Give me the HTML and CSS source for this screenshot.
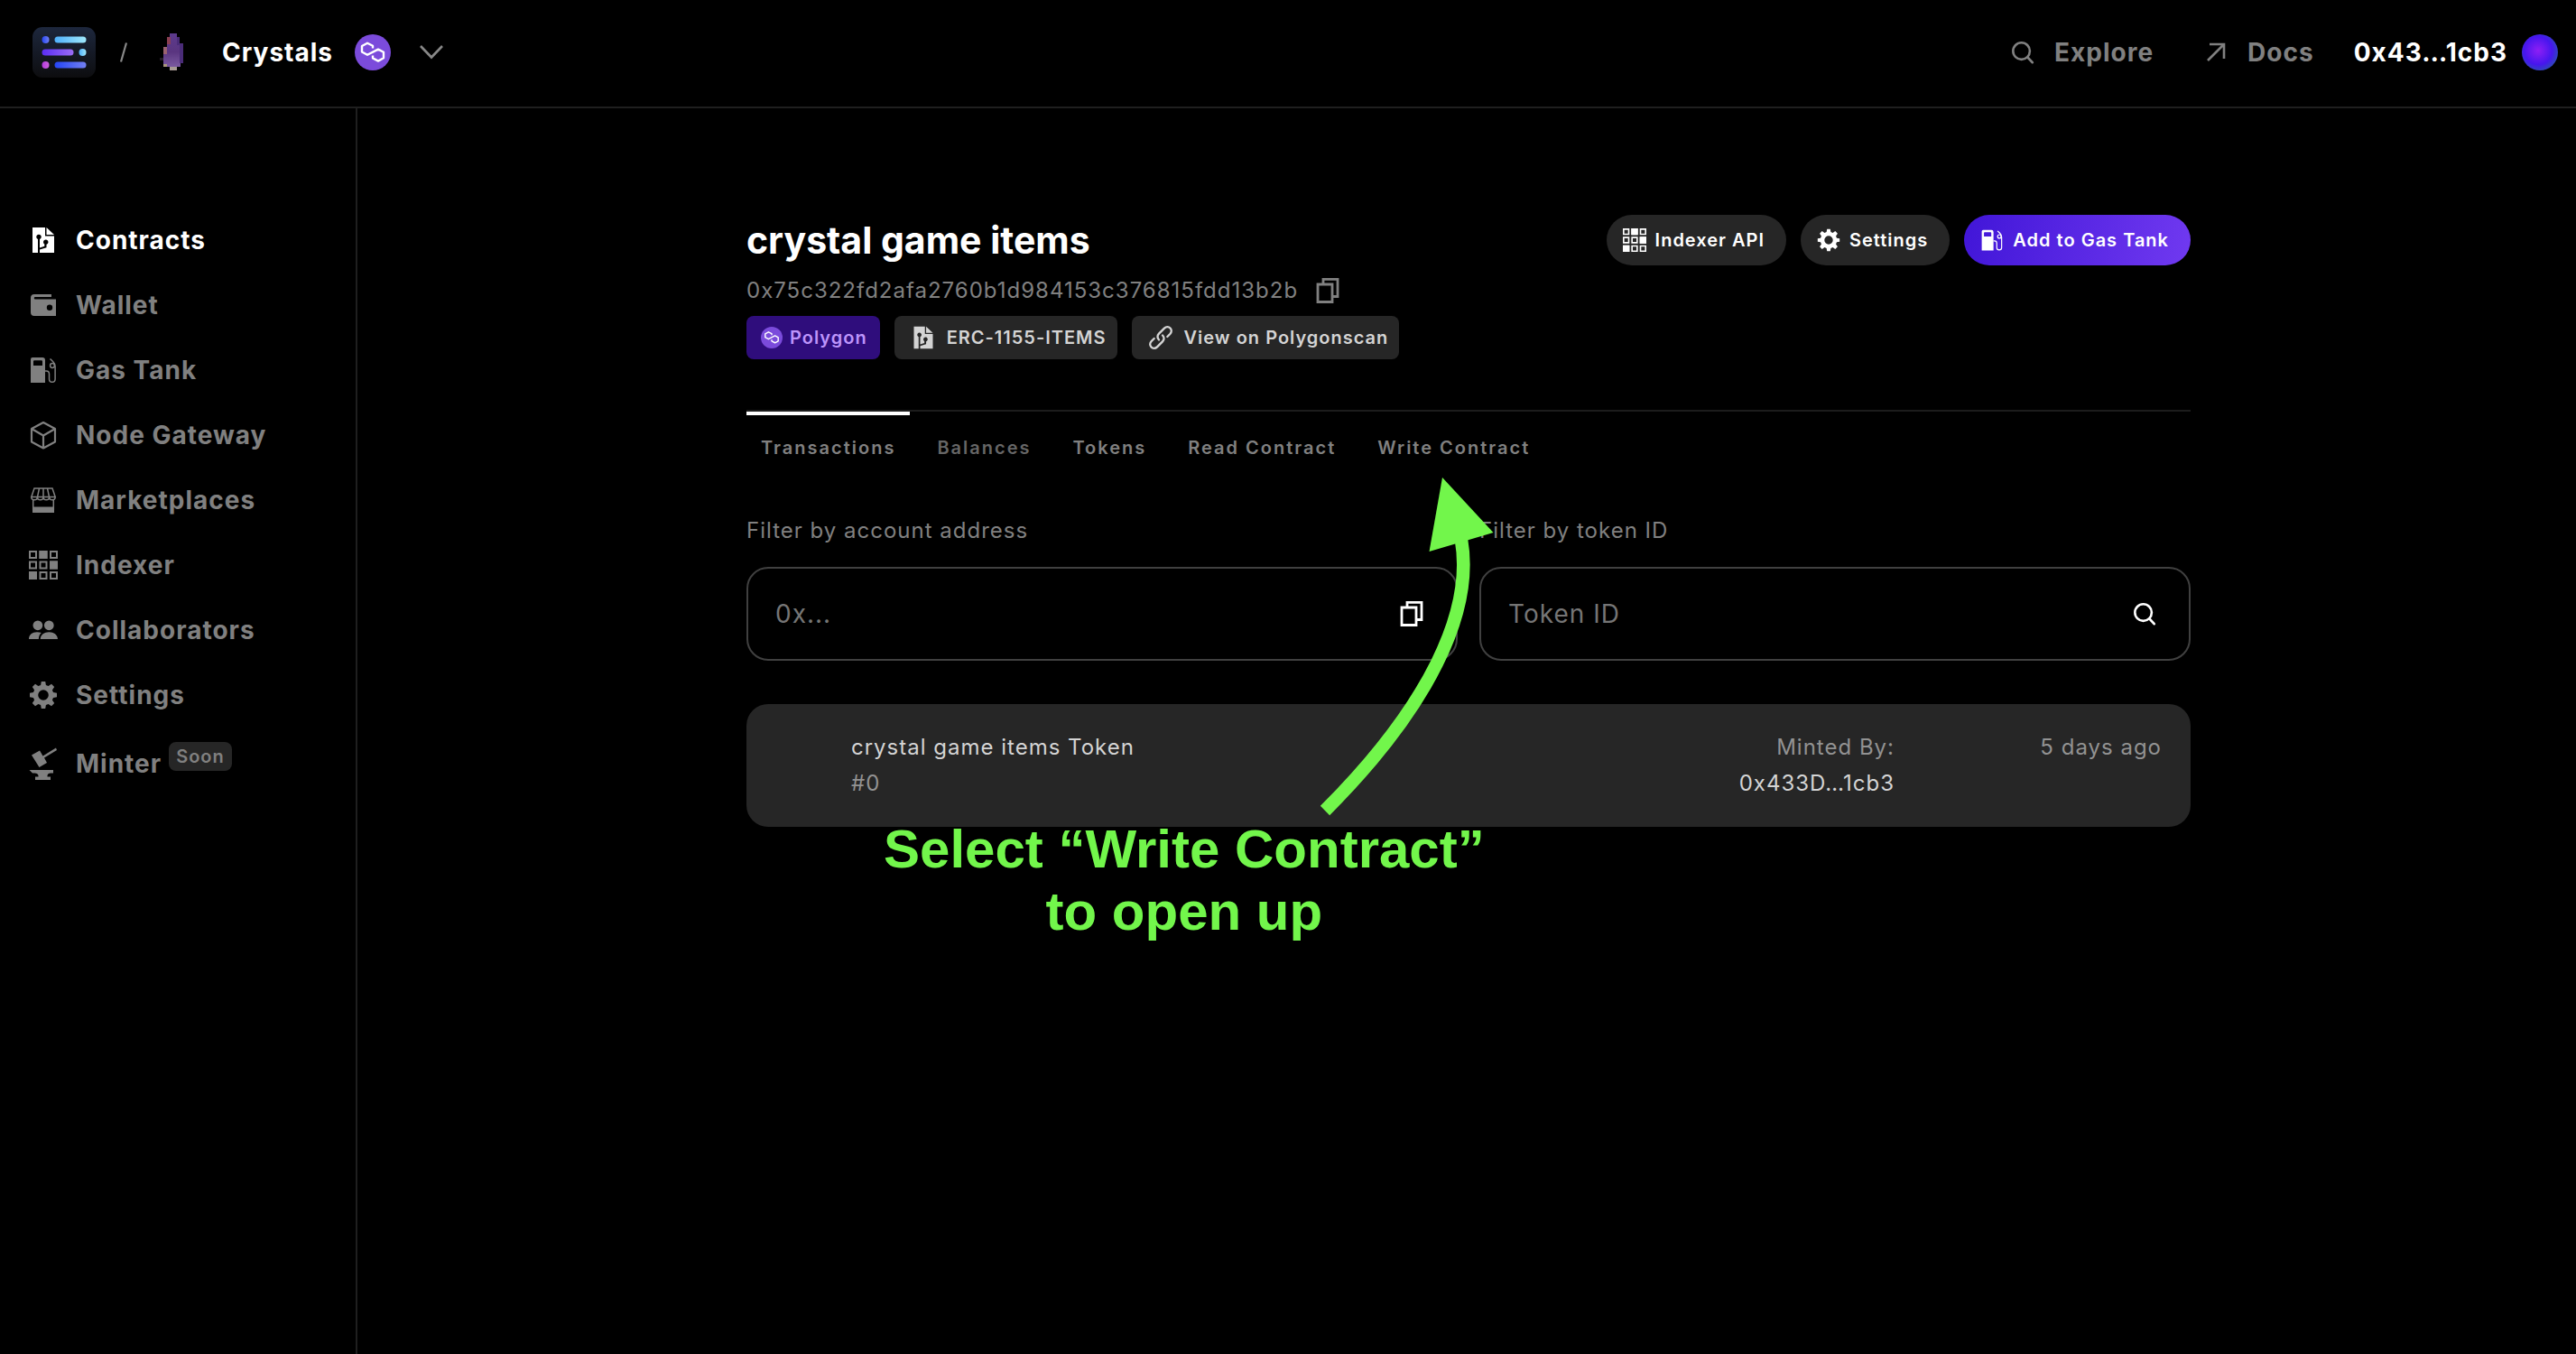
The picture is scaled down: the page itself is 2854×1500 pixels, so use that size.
FILE: index.html
```html
<!DOCTYPE html>
<html lang="en">
<head>
<meta charset="utf-8">
<meta name="viewport" content="width=device-width, initial-scale=1">
<title>crystal game items – Contracts</title>
<link rel="stylesheet" href="styles.css">
</head>
<body>
<svg class="sprite" aria-hidden="true">
  <defs>
    <linearGradient id="g-tile" x1="0" y1="0" x2="0" y2="1"><stop offset="0" stop-color="#1d273d"/><stop offset="1" stop-color="#0d0d0f"/></linearGradient>
    <linearGradient id="g-cyan"><stop offset="0" stop-color="#4fb0fb"/><stop offset="1" stop-color="#9fe8fb"/></linearGradient>
    <linearGradient id="g-violet"><stop offset="0" stop-color="#5a2df5"/><stop offset="1" stop-color="#9a6cf5"/></linearGradient>
    <linearGradient id="g-blue"><stop offset="0" stop-color="#2445f5"/><stop offset="1" stop-color="#7380f2"/></linearGradient>
    <linearGradient id="g-pink"><stop offset="0" stop-color="#b43ae0"/><stop offset="1" stop-color="#cc62dc"/></linearGradient>
    <linearGradient id="g-crystal" x1="0" y1="0" x2="0" y2="1"><stop offset="0" stop-color="#5c3a8c"/><stop offset=".5" stop-color="#5a3580"/><stop offset="1" stop-color="#8262a8"/></linearGradient>
  </defs>
  <symbol id="i-contract" viewBox="0 0 32 32">
    <path fill="currentColor" fill-rule="evenodd" d="M4 2h14v9.500h10V30H12v-3.500l7.500-2.200v-3.500a2.700 2.700 0 1 0-2.200-.3v2.300L12 24.500V15a2.700 2.700 0 1 0-2 0v15H4ZM19.500 2 28 10h-8.500Z"/>
  </symbol>
  <symbol id="i-wallet" viewBox="0 0 32 32">
    <path fill="currentColor" fill-rule="evenodd" d="M6 4h19v3H7a1 1 0 0 0 0 2.500h23V28H6a4 4 0 0 1-4-4V8a4 4 0 0 1 4-4Zm17 11.500a3.200 3.200 0 1 0 0 6.400 3.200 3.200 0 0 0 0-6.400Z"/>
  </symbol>
  <symbol id="i-gas" viewBox="0 0 32 32">
    <path fill="currentColor" fill-rule="evenodd" d="M4 2h11a3 3 0 0 1 3 3v25H2V4a2 2 0 0 1 2-2Zm2 3.200a1 1 0 0 0-1 1V11h10V6.200a1 1 0 0 0-1-1Z"/>
    <path fill="none" stroke="currentColor" stroke-width="1.500" d="M18 17h1.500c2 0 3 1.500 3 3.500v5.500a3.300 3.300 0 0 0 6.600 0V12c0-2-1-4-2.500-5.500L23.500 3.500"/>
    <circle cx="26" cy="11" r="2.400" fill="none" stroke="currentColor" stroke-width="1.500"/>
  </symbol>
  <symbol id="i-cube" viewBox="0 0 32 32">
    <path fill="none" stroke="currentColor" stroke-width="2.200" stroke-linejoin="round" d="M16 2 29 9v14.500L16 30.500 3 23.500V9Zm0 14.500v14M3 9l13 7.500L29 9"/>
  </symbol>
  <symbol id="i-market" viewBox="0 0 32 32">
    <path fill="none" stroke="currentColor" stroke-width="1.500" d="M6 3h20l3.200 9.500H2.800ZM11.500 3l-2 9.500M16 3v9.500M20.500 3l2 9.500M2.800 12.500a3.300 3.300 0 0 0 6.600 0 3.300 3.300 0 0 0 6.600 0 3.300 3.300 0 0 0 6.600 0 3.300 3.300 0 0 0 6.600 0M4.700 15v12M27.300 15v12"/>
    <path fill="currentColor" d="M4 23.500h24V30H4Z"/>
  </symbol>
  <symbol id="i-grid" viewBox="0 0 32 32">
    <path fill="none" stroke="currentColor" stroke-width="2" d="M1 1h7v7H1ZM12.500 1h7v7h-7ZM24 1h7v7h-7ZM1 12.500h7v7H1ZM12.500 12.500h7v7h-7ZM24 12.500h7v7h-7ZM1 24h7v7H1ZM12.500 24h7v7h-7ZM24 24h7v7h-7Z"/>
    <path fill="currentColor" d="M11.500 0h9v9h-9ZM23 11.500h9v9h-9ZM0 23h9v9H0Z"/>
  </symbol>
  <symbol id="i-people" viewBox="0 0 34 32">
    <circle cx="10.500" cy="10.500" r="5.700" fill="currentColor"/><circle cx="23.700" cy="10.500" r="5.700" fill="currentColor"/>
    <path fill="currentColor" d="M0 26.500C0 21.500 4 18.300 9.500 18.300c2 0 3.700.3 5.200 1-1.800 1.700-3 4-3.200 7.200ZM13.500 26.500c.3-5 4.500-8.200 10.200-8.200S33.700 21.500 34 26.500Z"/>
  </symbol>
  <symbol id="i-gear" viewBox="0 0 32 32">
    <path fill="currentColor" fill-rule="evenodd" d="M13.800 1h4.400l.7 4 2.700 1.100L25 3.800 28.200 7l-2.300 3.400 1.100 2.700 4 .7v4.400l-4 .7-1.100 2.700 2.300 3.400-3.200 3.200-3.400-2.300-2.700 1.100-.7 4h-4.400l-.7-4-2.700-1.100L7 28.200 3.800 25l2.300-3.400L5 18.900l-4-.7v-4.400l4-.7 1.100-2.700L3.800 7 7 3.800l3.400 2.300L13.100 5ZM16 10.200a5.800 5.800 0 1 0 0 11.600 5.800 5.800 0 0 0 0-11.600Z"/>
  </symbol>
  <symbol id="i-anvil" viewBox="0 0 32 36">
    <path fill="currentColor" d="M3 8.500 12 3.500l3.500 6L30 .5l1 2.500-14 8.500L20 17l-8.500 5ZM.5 25H27v3.500h-3c-2 0-3.500 1-3.500 3V32.500H24V36H7V32.500h3.500V31.500C10.500 29 8 28.500 4 28.500Z"/>
  </symbol>
  <symbol id="i-copy" viewBox="0 0 26 30">
    <path fill="none" stroke="currentColor" stroke-width="2.800" d="M2 8h16v19.500H2ZM8 8V2.400h16V21.500h-6"/>
  </symbol>
  <symbol id="i-search" viewBox="0 0 28 28">
    <circle cx="12.500" cy="12.500" r="10" fill="none" stroke="currentColor" stroke-width="2.800"/>
    <path stroke="currentColor" stroke-width="3" stroke-linecap="round" d="m20 20 5.500 6"/>
  </symbol>
  <symbol id="i-link" viewBox="0 0 28 28">
    <path fill="none" stroke="currentColor" stroke-width="2.400" stroke-linecap="round" d="M12 16.500c-2-2-2-4.800 0-6.800l6-6c2-2 4.800-2 6.500-.2s1.700 4.500-.2 6.500l-3 3M16 11.500c2 2 2 4.800 0 6.800l-6 6c-2 2-4.800 2-6.500.2s-1.700-4.500.2-6.500l3-3"/>
  </symbol>
  <symbol id="i-polygon" viewBox="0 0 40 40">
    <circle cx="20" cy="20" r="20" fill="#7b4bdb"/>
    <path fill="none" stroke="#fff" stroke-width="2.400" stroke-linejoin="round" d="M20 15.500v-2.700L14 9.700l-6 3.300v6.500l6 3.300 12-6.200 6 3.200v6.500l-6 3.300-6-3.200v-2.800"/>
  </symbol>
</svg>

<header class="topbar">
  <a class="logo" href="#" aria-label="Home">
    <svg viewBox="0 0 70 56"><rect width="70" height="56" rx="11" fill="url(#g-tile)"/>
      <circle cx="14.500" cy="14" r="4" fill="url(#g-blue)"/><rect x="24.500" y="10.500" width="35" height="7" rx="3.500" fill="url(#g-cyan)"/>
      <rect x="10.500" y="24.500" width="35" height="7" rx="3.500" fill="url(#g-violet)"/><circle cx="55.500" cy="28" r="4" fill="url(#g-cyan)"/>
      <circle cx="14.500" cy="42" r="4" fill="url(#g-pink)"/><rect x="24.500" y="38.500" width="35" height="7" rx="3.500" fill="url(#g-blue)"/></svg>
  </a>
  <svg class="slash" viewBox="0 0 10 24"><path stroke="#888" stroke-width="2.200" d="M2 22.500 8 1.500"/></svg>
  <button class="project" type="button">
    <svg class="crystal" viewBox="0 0 28 44" shape-rendering="crispEdges">
      <path fill="url(#g-crystal)" d="M12 1h8v4h3v7h4v22h-3v4h-4v4h-8v-4H5V16h4V5h3Z"/>
      <path fill="#8a3f52" d="M9 5h4v8H9Z"/><path fill="#9a6270" d="M5 16h4v8H5Z"/><path fill="#a8977c" d="M5 35h4v3H5Z"/><path fill="#a79a94" d="M12 38h8v4h-8Z"/><path fill="#241c26" d="M1 28h4v3H1Z"/>
      <path fill="#4a2c78" d="M20 5h3v9h-3ZM23 12h4v22h-4Z"/>
    </svg>
    <span>Crystals</span>
    <svg class="network" viewBox="0 0 40 40"><use href="#i-polygon"/></svg>
    <svg class="chevron" viewBox="0 0 28 18"><path fill="none" stroke="#888" stroke-width="2.600" d="m2 2 12 12.500L26 2"/></svg>
  </button>
  <nav class="toplinks" aria-label="Account">
    <a href="#"><svg class="s26"><use href="#i-search"/></svg>Explore</a>
    <a href="#"><svg class="s26" viewBox="0 0 26 26"><path fill="none" stroke="currentColor" stroke-width="2.600" d="M4 22 22 4M6 4h16v16"/></svg>Docs</a>
    <button class="account" type="button">0x43…1cb3<span class="avatar"></span></button>
  </nav>
</header>

<div class="layout">
  <nav class="sidebar" aria-label="Project">
    <a class="active" href="#" aria-current="page"><svg class="icon"><use href="#i-contract"/></svg>Contracts</a>
    <a href="#"><svg class="icon"><use href="#i-wallet"/></svg>Wallet</a>
    <a href="#"><svg class="icon"><use href="#i-gas"/></svg>Gas Tank</a>
    <a href="#"><svg class="icon"><use href="#i-cube"/></svg>Node Gateway</a>
    <a href="#"><svg class="icon"><use href="#i-market"/></svg>Marketplaces</a>
    <a href="#"><svg class="icon"><use href="#i-grid"/></svg>Indexer</a>
    <a href="#"><svg class="icon"><use href="#i-people"/></svg>Collaborators</a>
    <a href="#"><svg class="icon"><use href="#i-gear"/></svg>Settings</a>
    <a class="minter" href="#"><svg class="icon"><use href="#i-anvil"/></svg>Minter<span class="soon">Soon</span></a>
  </nav>

  <main>
    <div class="content">
      <div class="heading">
        <div class="summary">
          <h1>crystal game items</h1>
          <p class="address">0x75c322fd2afa2760b1d984153c376815fdd13b2b
            <button class="copy" type="button" aria-label="Copy address"><svg><use href="#i-copy"/></svg></button></p>
          <div class="chips">
            <span class="chip polygon"><svg><use href="#i-polygon"/></svg>Polygon</span>
            <span class="chip"><svg><use href="#i-contract"/></svg>ERC-1155-ITEMS</span>
            <a class="chip" href="#"><svg><use href="#i-link"/></svg>View on Polygonscan</a>
          </div>
        </div>
        <div class="actions">
          <button type="button"><svg><use href="#i-grid"/></svg>Indexer API</button>
          <button type="button"><svg><use href="#i-gear"/></svg>Settings</button>
          <button class="primary" type="button"><svg><use href="#i-gas"/></svg>Add to Gas Tank</button>
        </div>
      </div>

      <nav class="tabs" aria-label="Contract">
        <a class="current" href="#">Transactions</a>
        <a class="muted" href="#">Balances</a>
        <a href="#">Tokens</a>
        <a href="#">Read Contract</a>
        <a href="#">Write Contract</a>
      </nav>

      <form class="filters">
        <div class="filter">
          <label for="account">Filter by account address</label>
          <div class="field"><input id="account" type="text" placeholder="0x..."><button type="button" aria-label="Paste address"><svg><use href="#i-copy"/></svg></button></div>
        </div>
        <div class="filter">
          <label for="token">Filter by token ID</label>
          <div class="field"><input id="token" type="text" placeholder="Token ID"><button type="button" aria-label="Search"><svg><use href="#i-search"/></svg></button></div>
        </div>
      </form>

      <article class="transaction">
        <div class="token"><span class="strong">crystal game items Token</span><span>#0</span></div>
        <div class="minted"><span>Minted By:</span><span class="strong">0x433D…1cb3</span></div>
        <time>5 days ago</time>
      </article>

      <svg class="arrow" viewBox="0 0 200 380" aria-hidden="true">
        <path fill="none" stroke="#72f64b" stroke-width="14.600" d="M164 70C178 150 128 255 13 370"/>
        <path fill="#72f64b" d="M143 1 199.500 62 128.500 83Z"/>
      </svg>
      <p class="callout">Select “Write Contract”<br>to open up</p>
    </div>
  </main>
</div>
</body>
</html>
```
FILE: styles.css
```css
* { box-sizing: border-box; }

body {
  display: flex;
  flex-direction: column;
  min-height: 100vh;
  margin: 0;
  background: #000;
  color: #fff;
  font: 400 24px/40px Inter, "Liberation Sans", sans-serif;
  letter-spacing: 1px;
}

a { color: inherit; text-decoration: none; }
h1, p { margin: 0; }
svg { display: block; flex: none; }
.sprite { position: absolute; width: 0; height: 0; }

button {
  display: flex;
  align-items: center;
  padding: 0;
  border: 0;
  background: none;
  color: inherit;
  font: inherit;
  letter-spacing: inherit;
  cursor: pointer;
}

/* Top bar */
.topbar {
  display: flex;
  align-items: center;
  min-height: 120px;
  padding: 0 20px 2px 36px;
  border-bottom: 2px solid #1f1f1f;
  font-size: 28px;
  font-weight: 700;
}
.logo svg { width: 70px; height: 56px; }
.slash { width: 10px; height: 24px; margin: 0 34px 0 26px; }
.crystal { width: 28px; height: 44px; }
.project span { margin: 0 24px 0 42px; }
.network { width: 40px; height: 40px; }
.chevron { width: 28px; height: 18px; margin-left: 31px; }
.toplinks {
  display: flex;
  align-items: center;
  margin-left: auto;
}
.toplinks a {
  display: flex;
  align-items: center;
  gap: 22px;
  margin-right: 56px;
  color: #808080;
}
.toplinks a + a { margin-right: 44px; }
.s26 { width: 26px; height: 26px; }
.account { gap: 16px; }
.avatar {
  width: 40px;
  height: 40px;
  border-radius: 50%;
  background: radial-gradient(circle at 45% 45%, #8e1ff5 0, #4616ee 50%, #2f49b8 75%);
}

/* Side navigation */
.layout { display: flex; flex: 1; gap: 4px; }
.sidebar {
  display: flex;
  flex: none;
  flex-direction: column;
  gap: 32px;
  width: 396px;
  padding: 126px 16px 32px 32px;
  border-right: 2px solid #1f1f1f;
  color: #808080;
  font-size: 28px;
  font-weight: 700;
}
.sidebar a { display: flex; align-items: center; gap: 20px; }
.sidebar .active { color: #fff; }
.icon { width: 32px; height: 32px; }
.minter { margin-top: 4px; }
.minter .icon { height: 36px; }
.soon {
  align-self: flex-start;
  margin: -4px 0 0 -12px;
  padding: 0 8px;
  border-radius: 8px;
  background: #262626;
  font-size: 20px;
  font-weight: 600;
  line-height: 32px;
}

/* Contract page */
main { flex: 1; min-width: 0; padding: 118px 32px 64px; }
.content { position: relative; max-width: 1600px; margin: 0 auto; }
.heading { display: flex; justify-content: space-between; align-items: flex-start; }
h1 { font-size: 41px; font-weight: 700; line-height: 56px; letter-spacing: 0; }
.address {
  display: flex;
  align-items: center;
  gap: 20px;
  margin-top: 8px;
  color: #808080;
  line-height: 40px;
}
.copy svg { width: 26px; height: 30px; }
.chips { display: flex; gap: 16px; margin-top: 8px; }
.chip {
  display: flex;
  align-items: center;
  gap: 12px;
  padding: 0 12px 0 18px;
  border-radius: 8px;
  background: #262626;
  color: #d4d4d4;
  font-size: 20px;
  font-weight: 600;
  line-height: 48px;
}
.chip svg { width: 28px; height: 28px; }
.chip.polygon { gap: 8px; padding: 0 14px 0 16px; background: #2f0d7c; color: #bd94fb; }
.chip.polygon svg { width: 24px; height: 24px; }
.actions { display: flex; gap: 16px; }
.actions button {
  gap: 10px;
  padding: 0 24px 0 18px;
  border-radius: 28px;
  background: #262626;
  font-size: 20px;
  font-weight: 600;
  line-height: 56px;
}
.actions svg { width: 26px; height: 26px; }
.actions .primary { background: linear-gradient(100deg, #4116d8, #7039f0); }

.tabs {
  display: flex;
  gap: 14px;
  margin-top: 56px;
  border-top: 2px solid #1c1c1c;
  color: #808080;
  font-size: 20px;
  font-weight: 600;
  letter-spacing: 2px;
}
.tabs a { padding: 16px 16px 0; border-top: 4px solid transparent; }
.tabs .current { border-color: #fff; }
.tabs .muted { color: #666; }

.filters {
  display: grid;
  grid-template-columns: 1fr 1fr;
  gap: 24px;
  margin-top: 52px;
}
.filter { display: flex; flex-direction: column; gap: 20px; color: #808080; }
.field {
  display: flex;
  align-items: center;
  padding: 0 36px 0 30px;
  border: 2px solid #404040;
  border-radius: 24px;
  color: #fff;
}
.field input {
  flex: 1;
  min-width: 0;
  height: 100px;
  padding: 0;
  border: 0;
  outline: 0;
  background: none;
  color: inherit;
  font: 400 28px/40px Inter, "Liberation Sans", sans-serif;
  letter-spacing: 1px;
}
.field input::placeholder { color: #757575; opacity: 1; }
.field svg { width: 26px; height: 30px; }

.transaction {
  display: flex;
  gap: 32px;
  margin-top: 48px;
  padding: 28px 32px 28px 116px;
  border-radius: 24px;
  background: #262626;
  color: #929292;
}
.token, .minted { display: flex; flex-direction: column; }
.token { flex: 1; }
.minted { text-align: right; }
.transaction time { width: 264px; text-align: right; }
.strong { color: #d4d4d4; }

/* Tutorial callout drawn over the page */
.arrow { position: absolute; top: 290px; left: 628px; width: 200px; height: 380px; }
.callout {
  position: absolute;
  top: 668px;
  left: 152px;
  color: #72f64b;
  font: 700 60px/69px "Liberation Sans", Arial, sans-serif;
  letter-spacing: 0;
  text-align: center;
  white-space: nowrap;
}
```
